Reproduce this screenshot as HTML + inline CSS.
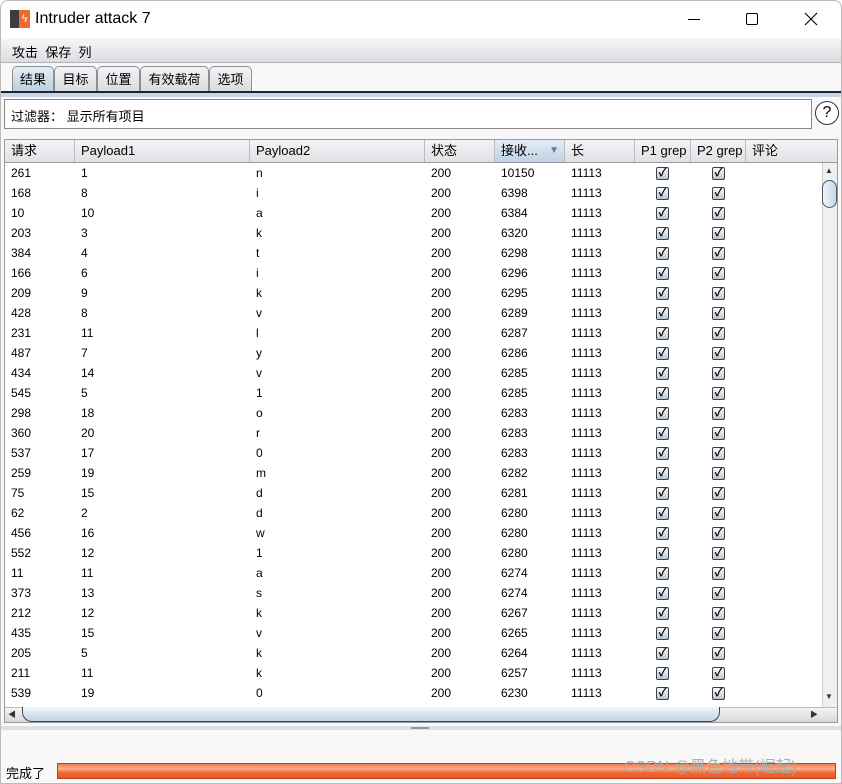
<!DOCTYPE html>
<html><head><meta charset="utf-8"><style>
*{margin:0;padding:0;box-sizing:border-box}
body{width:842px;height:784px;background:#fff;font-family:"Liberation Sans","Noto Sans CJK SC",sans-serif;font-size:12px;color:#000;position:relative;overflow:hidden}
.a{position:absolute}
#win{left:0;top:0;width:842px;height:784px;border:1px solid #bbb;border-radius:8px 8px 0 0;background:#f8f8f8}
.menu{left:1px;top:38px;width:840px;height:25px;background:linear-gradient(#f6f7f8,#dcdde0);border-bottom:1px solid #aeb2b8}
.tab{top:66px;height:26px;border:1px solid #8a8f96;border-bottom:none;border-radius:5px 5px 0 0;background:linear-gradient(#f2f3f5,#d9dbde);font-size:13px;text-align:center;line-height:25px}
.tab.sel{background:linear-gradient(#e6eef6,#b9cde0)}
table{border-collapse:collapse;table-layout:fixed}
td{height:20px;padding-left:6px;font-size:12px;white-space:nowrap;overflow:hidden}
td.c{padding-left:21px}
.hd{top:140px;height:23px;background:linear-gradient(#f3f4f6,#dfe1e4);border-bottom:1px solid #999}
.hc{position:absolute;top:0;height:22px;border-right:1px solid #b8bcc2;padding-left:6px;line-height:22px;font-size:13px}
.cb{display:inline-block;width:13px;height:13px;border:1px solid #3a4048;border-radius:2px;background:linear-gradient(#fff,#b8c4d0);font-size:11px;line-height:11px;text-align:center;font-weight:bold;vertical-align:middle}
</style></head><body>
<div id="win" class="a"></div>
<div class="a" style="left:1px;top:1px;width:840px;height:37px;background:#fff;border-radius:8px 8px 0 0"></div>
<div class="a" style="left:10px;top:10px;width:9px;height:18px;background:#3d3d3d"></div>
<div class="a" style="left:19px;top:10px;width:11px;height:18px;background:#ef6a2e;color:#fff;font-size:11px;line-height:18px;text-align:center">ϟ</div>
<div class="a" style="left:35px;top:10px;font-size:16px">Intruder attack 7</div>
<div class="a" style="left:688px;top:19px;width:12px;height:1px;background:#000"></div>
<div class="a" style="left:746px;top:13px;width:12px;height:12px;border:1px solid #000;border-radius:2px"></div>
<svg class="a" style="left:804px;top:12px" width="14" height="14"><path d="M1 1L13 13M13 1L1 13" stroke="#000" stroke-width="1.1"/></svg>
<div class="a menu"></div>
<div class="a" style="left:12px;top:42px;font-size:13px">攻击&nbsp;&nbsp;保存&nbsp;&nbsp;列</div>
<div class="a tab sel" style="left:12px;width:42px">结果</div>
<div class="a tab" style="left:54px;width:43px">目标</div>
<div class="a tab" style="left:97px;width:43px">位置</div>
<div class="a tab" style="left:140px;width:69px">有效载荷</div>
<div class="a tab" style="left:209px;width:43px">选项</div>
<div class="a" style="left:1px;top:91px;width:840px;height:2px;background:#1c2430"></div>
<div class="a" style="left:1px;top:93px;width:840px;height:4px;background:#c6d6e6"></div>
<div class="a" style="left:4px;top:99px;width:808px;height:30px;border:1px solid #888;background:#fff"></div>
<div class="a" style="left:11px;top:106px;font-size:13px">过滤器：&nbsp;显示所有项目</div>
<div class="a" style="left:815px;top:101px;width:24px;height:24px;border:1.5px solid #333;border-radius:50%;text-align:center;line-height:21px;font-size:16px;background:#fff">?</div>
<div class="a" style="left:4px;top:139px;width:834px;height:584px;border:1px solid #999;background:#fff"></div>
<div class="a hd" style="left:5px;width:832px">
<div class="hc" style="left:0;width:70px">请求</div>
<div class="hc" style="left:70px;width:175px">Payload1</div>
<div class="hc" style="left:245px;width:175px">Payload2</div>
<div class="hc" style="left:420px;width:70px">状态</div>
<div class="hc" style="left:490px;width:70px;background:linear-gradient(#e4ecf4,#bfd2e4)">接收...<span style="position:absolute;right:5px;color:#5d7ea0;font-size:10px">▼</span></div>
<div class="hc" style="left:560px;width:70px">长</div>
<div class="hc" style="left:630px;width:56px">P1 grep</div>
<div class="hc" style="left:686px;width:55px">P2 grep</div>
<div class="hc" style="left:741px;width:77px;border-right:none">评论</div>
</div>
<div class="a" style="left:5px;top:163px;width:817px;height:544px;overflow:hidden">
<table style="width:817px">
<colgroup><col style="width:70px"><col style="width:175px"><col style="width:175px"><col style="width:70px"><col style="width:70px"><col style="width:70px"><col style="width:56px"><col style="width:55px"><col></colgroup>
<tbody>
<tr><td>261</td><td>1</td><td>n</td><td>200</td><td>10150</td><td>11113</td><td class="c"><span class="cb">✓</span></td><td class="c"><span class="cb">✓</span></td><td></td></tr>
<tr><td>168</td><td>8</td><td>i</td><td>200</td><td>6398</td><td>11113</td><td class="c"><span class="cb">✓</span></td><td class="c"><span class="cb">✓</span></td><td></td></tr>
<tr><td>10</td><td>10</td><td>a</td><td>200</td><td>6384</td><td>11113</td><td class="c"><span class="cb">✓</span></td><td class="c"><span class="cb">✓</span></td><td></td></tr>
<tr><td>203</td><td>3</td><td>k</td><td>200</td><td>6320</td><td>11113</td><td class="c"><span class="cb">✓</span></td><td class="c"><span class="cb">✓</span></td><td></td></tr>
<tr><td>384</td><td>4</td><td>t</td><td>200</td><td>6298</td><td>11113</td><td class="c"><span class="cb">✓</span></td><td class="c"><span class="cb">✓</span></td><td></td></tr>
<tr><td>166</td><td>6</td><td>i</td><td>200</td><td>6296</td><td>11113</td><td class="c"><span class="cb">✓</span></td><td class="c"><span class="cb">✓</span></td><td></td></tr>
<tr><td>209</td><td>9</td><td>k</td><td>200</td><td>6295</td><td>11113</td><td class="c"><span class="cb">✓</span></td><td class="c"><span class="cb">✓</span></td><td></td></tr>
<tr><td>428</td><td>8</td><td>v</td><td>200</td><td>6289</td><td>11113</td><td class="c"><span class="cb">✓</span></td><td class="c"><span class="cb">✓</span></td><td></td></tr>
<tr><td>231</td><td>11</td><td>l</td><td>200</td><td>6287</td><td>11113</td><td class="c"><span class="cb">✓</span></td><td class="c"><span class="cb">✓</span></td><td></td></tr>
<tr><td>487</td><td>7</td><td>y</td><td>200</td><td>6286</td><td>11113</td><td class="c"><span class="cb">✓</span></td><td class="c"><span class="cb">✓</span></td><td></td></tr>
<tr><td>434</td><td>14</td><td>v</td><td>200</td><td>6285</td><td>11113</td><td class="c"><span class="cb">✓</span></td><td class="c"><span class="cb">✓</span></td><td></td></tr>
<tr><td>545</td><td>5</td><td>1</td><td>200</td><td>6285</td><td>11113</td><td class="c"><span class="cb">✓</span></td><td class="c"><span class="cb">✓</span></td><td></td></tr>
<tr><td>298</td><td>18</td><td>o</td><td>200</td><td>6283</td><td>11113</td><td class="c"><span class="cb">✓</span></td><td class="c"><span class="cb">✓</span></td><td></td></tr>
<tr><td>360</td><td>20</td><td>r</td><td>200</td><td>6283</td><td>11113</td><td class="c"><span class="cb">✓</span></td><td class="c"><span class="cb">✓</span></td><td></td></tr>
<tr><td>537</td><td>17</td><td>0</td><td>200</td><td>6283</td><td>11113</td><td class="c"><span class="cb">✓</span></td><td class="c"><span class="cb">✓</span></td><td></td></tr>
<tr><td>259</td><td>19</td><td>m</td><td>200</td><td>6282</td><td>11113</td><td class="c"><span class="cb">✓</span></td><td class="c"><span class="cb">✓</span></td><td></td></tr>
<tr><td>75</td><td>15</td><td>d</td><td>200</td><td>6281</td><td>11113</td><td class="c"><span class="cb">✓</span></td><td class="c"><span class="cb">✓</span></td><td></td></tr>
<tr><td>62</td><td>2</td><td>d</td><td>200</td><td>6280</td><td>11113</td><td class="c"><span class="cb">✓</span></td><td class="c"><span class="cb">✓</span></td><td></td></tr>
<tr><td>456</td><td>16</td><td>w</td><td>200</td><td>6280</td><td>11113</td><td class="c"><span class="cb">✓</span></td><td class="c"><span class="cb">✓</span></td><td></td></tr>
<tr><td>552</td><td>12</td><td>1</td><td>200</td><td>6280</td><td>11113</td><td class="c"><span class="cb">✓</span></td><td class="c"><span class="cb">✓</span></td><td></td></tr>
<tr><td>11</td><td>11</td><td>a</td><td>200</td><td>6274</td><td>11113</td><td class="c"><span class="cb">✓</span></td><td class="c"><span class="cb">✓</span></td><td></td></tr>
<tr><td>373</td><td>13</td><td>s</td><td>200</td><td>6274</td><td>11113</td><td class="c"><span class="cb">✓</span></td><td class="c"><span class="cb">✓</span></td><td></td></tr>
<tr><td>212</td><td>12</td><td>k</td><td>200</td><td>6267</td><td>11113</td><td class="c"><span class="cb">✓</span></td><td class="c"><span class="cb">✓</span></td><td></td></tr>
<tr><td>435</td><td>15</td><td>v</td><td>200</td><td>6265</td><td>11113</td><td class="c"><span class="cb">✓</span></td><td class="c"><span class="cb">✓</span></td><td></td></tr>
<tr><td>205</td><td>5</td><td>k</td><td>200</td><td>6264</td><td>11113</td><td class="c"><span class="cb">✓</span></td><td class="c"><span class="cb">✓</span></td><td></td></tr>
<tr><td>211</td><td>11</td><td>k</td><td>200</td><td>6257</td><td>11113</td><td class="c"><span class="cb">✓</span></td><td class="c"><span class="cb">✓</span></td><td></td></tr>
<tr><td>539</td><td>19</td><td>0</td><td>200</td><td>6230</td><td>11113</td><td class="c"><span class="cb">✓</span></td><td class="c"><span class="cb">✓</span></td><td></td></tr>
<tr><td></td><td></td><td></td><td></td><td></td><td></td><td class="c"><span class="cb">✓</span></td><td class="c"><span class="cb">✓</span></td><td></td></tr>
</tbody></table></div>
<div class="a" style="left:822px;top:163px;width:15px;height:544px;background:#f0f0f0;border-left:1px solid #ccc"></div>
<div class="a" style="left:825px;top:166px;font-size:8px;color:#333">▲</div>
<div class="a" style="left:825px;top:692px;font-size:8px;color:#333">▼</div>
<div class="a" style="left:822px;top:180px;width:15px;height:28px;border:1px solid #555;border-radius:8px;background:linear-gradient(90deg,#eef4fa,#c4d6e8)"></div>
<div class="a" style="left:5px;top:707px;width:832px;height:15px;background:linear-gradient(#f4f4f4,#d8d8d8);border-top:1px solid #bbb"></div>
<div class="a" style="left:8px;top:709px;font-size:8px;color:#333">◀</div>
<div class="a" style="left:810px;top:709px;font-size:8px;color:#333">▶</div>
<div class="a" style="left:22px;top:707px;width:698px;height:15px;border:1px solid #445;border-top:none;border-radius:0 0 10px 10px;background:linear-gradient(#f2f6fa,#c0d2e4)"></div>
<div class="a" style="left:1px;top:726px;width:840px;height:4px;background:#dcdfe3"></div>
<div class="a" style="left:411px;top:727px;width:18px;height:2px;background:#999"></div>
<div class="a" style="left:6px;top:763px;font-size:13px">完成了</div>
<div class="a" style="left:57px;top:763px;width:779px;height:16px;border:1px solid #c0401a;background:linear-gradient(#f57a4a,#ffb08a 35%,#f06a38 60%,#e85a28)"></div>
<div class="a" style="left:624px;top:753px;font-size:16px;color:rgba(170,170,170,0.95)">CSDN @黑色地带(崛起)</div>
</body></html>
